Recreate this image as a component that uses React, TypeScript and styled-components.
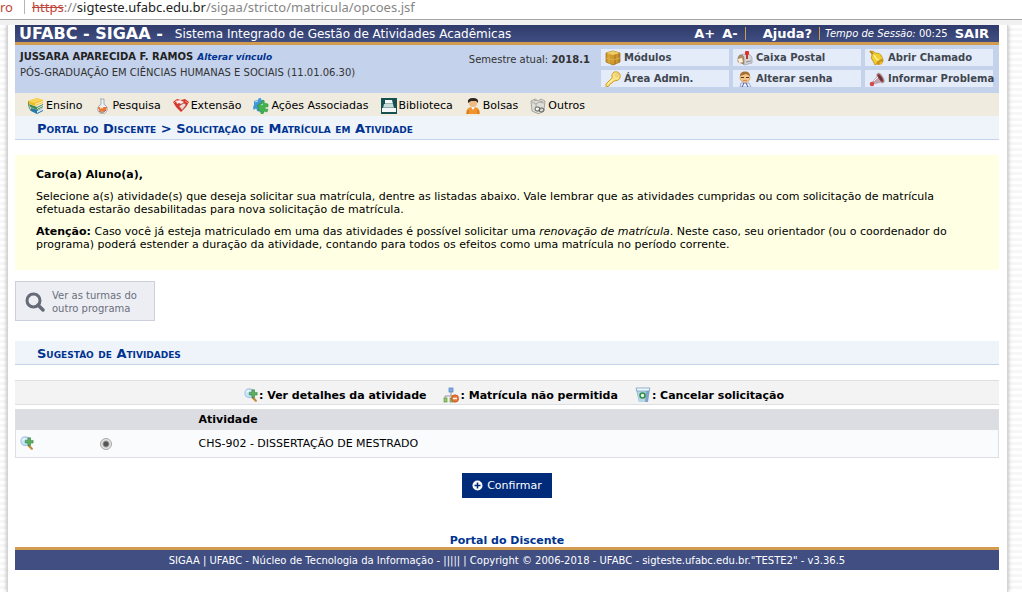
import React from "react";
import styled, { createGlobalStyle } from "styled-components";

const GlobalStyle = createGlobalStyle`
  * { box-sizing: border-box; }
  body {
    margin: 0;
    background: #fff;
    color: #000;
    font: 11px/13px Verdana, "DejaVu Sans", sans-serif;
  }
  a { color: inherit; text-decoration: none; }
  svg { display: block; flex: none; }
`;

const Screen = styled.div`
  min-height: 100vh;
  display: flex;
  flex-direction: column;
`;

const AddressBar = styled.div`
  display: flex;
  height: 20px;
  border-bottom: 1px solid #a8a6a4;
  background: #fff;
  color: #868686;
  font: 13px/14px "Noto Sans", sans-serif;
  white-space: nowrap;
`;

const SecurityLabel = styled.span`
  width: 25px;
  height: 14px;
  margin-right: 7px;
  border-right: 1px solid #b5b5b5;
  color: #c0453a;
`;

const Scheme = styled.s`
  color: #c0453a;
`;

const Host = styled.span`
  color: #222;
`;

const Backdrop = styled.div`
  flex: 1;
  display: flex;
  padding: 0 14px 0 7px;
  border-top: 5px solid #f1f1f1;
  background: repeating-linear-gradient(#fff 0 3px, #f7f7f7 3px 6px);
`;

const Page = styled.div`
  flex: 1;
  min-width: 0;
  padding: 0 8px 22px 7px;
  border: solid #d4d4d4;
  border-width: 0 1px;
  background: #fff;
  box-shadow: 0 0 4px #aaa;
  clip-path: inset(0 -6px 0 -6px);
`;

const TopBar = styled.header`
  display: flex;
  align-items: center;
  height: 20px;
  padding: 0 10px 0 4px;
  border-bottom: 3px solid #d29c50;
  background: linear-gradient(#2f3b6b, #404e82);
  color: #fff;
  white-space: nowrap;
`;

const Brand = styled.h1`
  margin: 0 12px 0 0;
  font-size: 16px;
  line-height: 17px;
`;

const SystemName = styled.span`
  flex: 1;
  padding-top: 2px;
  font-size: 12px;
`;

const TopLinks = styled.nav`
  display: flex;
  align-items: center;
  gap: 7px;
  font-weight: bold;
  font-size: 13px;
`;

const Divided = styled.span<{ $pad?: boolean }>`
  display: flex;
  align-items: center;
  height: 13px;
  padding-left: ${(p) => (p.$pad ? 17 : 5)}px;
  border-left: 1px solid #d29c50;
`;

const Session = styled.span`
  font-size: 10px;
  font-weight: normal;
`;

const UserPanel = styled.section`
  display: flex;
  min-height: 48px;
  padding: 4px 6px 6px 5px;
  background: #c4d2eb;
  color: #333;
`;

const UserInfo = styled.div`
  flex: 1;
  font-size: 10px;
  line-height: 15px;
  white-space: nowrap;
`;

const UserName = styled.strong`
  color: #222;
`;

const SwitchLink = styled.a`
  margin-left: 4px;
  color: #003390;
  font-size: 9px;
  font-weight: bold;
  font-style: italic;
`;

const Semester = styled.div`
  padding: 4px 11px 0 0;
  font-size: 10px;
  white-space: nowrap;
`;

const QuickLinks = styled.nav`
  display: grid;
  grid-template-columns: repeat(3, 128px);
  grid-auto-rows: 17px;
  gap: 4px;
`;

const QuickLink = styled.a`
  display: flex;
  align-items: center;
  gap: 3px;
  padding-left: 4px;
  background: #e5ecf9;
  color: #404650;
  font-size: 10px;
  font-weight: bold;
  white-space: nowrap;
`;

const Menu = styled.nav`
  display: flex;
  align-items: center;
  gap: 12px;
  height: 23px;
  padding: 2px 0 0 13px;
  background: #efebde;
`;

const MenuItem = styled.a`
  display: flex;
  align-items: center;
  gap: 2px;
  white-space: nowrap;
`;

const Heading = styled.h2`
  margin: 0;
  padding: 6px 22px 3px;
  border-bottom: 1px solid #c4d2eb;
  background: #eff3fa;
  color: #003390;
  font-size: 13px;
  line-height: 14px;
  font-variant: small-caps;
`;

const Notice = styled.section`
  margin: 15px 0 11px;
  padding: 13px 21px 10px;
  background: #ffffe4;
`;

const Paragraph = styled.p`
  margin: 0 0 9px;
`;

const OtherProgram = styled.button`
  display: flex;
  align-items: center;
  gap: 7px;
  width: 140px;
  height: 40px;
  margin: 0 0 20px;
  padding: 2px 9px 0;
  border: 1px solid #ccd0dc;
  background: #edeef3;
  color: #6a6f7c;
  font: 10px/13px Verdana, "DejaVu Sans", sans-serif;
  text-align: left;
`;

const Legend = styled.div`
  display: flex;
  justify-content: center;
  gap: 17px;
  height: 25px;
  margin: 15px 0 4px;
  padding: 5px 0 0 14px;
  border: solid #dedfe3;
  border-width: 1px 0;
  background: #f3f3f3;
  font-weight: bold;
`;

const LegendItem = styled.span`
  display: flex;
  align-items: center;
  gap: 1px;
`;

const ActivityTable = styled.table`
  width: 100%;
  border: 1px solid #dedfe3;
  border-collapse: collapse;
  table-layout: fixed;
  background: #fafbfd;
`;

const Column = styled.col<{ $width?: number }>`
  width: ${(p) => (p.$width ? `${p.$width}px` : "auto")};
`;

const HeadCell = styled.th`
  height: 20px;
  padding: 0;
  background: #dcdde2;
  text-align: left;
`;

const Cell = styled.td`
  height: 28px;
  padding: 0;
`;

const DetailsButton = styled.button`
  display: block;
  padding: 0 0 0 4px;
  border: 0;
  background: none;
`;

const Radio = styled.input`
  display: block;
  appearance: none;
  width: 12px;
  height: 12px;
  margin: 2px 0 0;
  border: 1px solid #a8a8a8;
  border-radius: 50%;
  background: radial-gradient(circle, #555 0 2px, #e6e6e6 4px);
`;

const Actions = styled.div`
  display: flex;
  flex-direction: column;
  align-items: center;
  gap: 36px;
  padding-top: 15px;
`;

const Confirm = styled.button`
  display: flex;
  align-items: center;
  gap: 4px;
  height: 25px;
  padding: 0 10px;
  border: 0;
  background: #002b7a;
  color: #fff;
  font: 11px/13px Verdana, "DejaVu Sans", sans-serif;
`;

const PortalLink = styled.a`
  color: #003390;
  font-weight: bold;
`;

const Footer = styled.footer`
  padding: 4px 0 3px;
  border-top: 3px solid #d29c50;
  background: #404e82;
  color: #fff;
  font-size: 10px;
  text-align: center;
`;

const Svg = ({ children, size = 16 }: { children: React.ReactNode; size?: number }) => (
  <svg width={size} height={size} viewBox="0 0 16 16" aria-hidden="true">{children}</svg>
);

const Books = () => (
  <Svg>
    <path d="M3 10l7 2 5-2v3l-6 3-6-3z" fill="#2578a8" />
    <path d="M9 13l6-3v2l-6 3z" fill="#dceaf2" />
    <path d="M1 6l8 3 6-3v3l-6 3-7-3z" fill="#3f8a58" />
    <path d="M9 10l6-3v1l-6 3z" fill="#f1f4e6" />
    <path d="M0 3l9-3 6 2v3L7 8 1 6z" fill="#f1bd27" />
    <path d="M0 3l7 2 8-3-6-2z" fill="#f7d457" />
    <path d="M7 6l8-3v1L7 7z" fill="#fff6cf" />
    <path d="M0 3l1 6 2 4" fill="none" stroke="#5b8c5c" />
  </Svg>
);

const Flask = () => (
  <Svg>
    <path d="M6 1h4M7 1v5.500a4.800 4.800 0 1 0 3 0V1" fill="#eef2f6" stroke="#a3adb8" />
    <path d="M4 9h9a4.400 4.400 0 1 1-9 0z" fill="#e8783a" />
    <path d="M5 13q4 3 7-1" fill="none" stroke="#b44a1e" />
    <path d="M6 10q2-1 3 0" fill="none" stroke="#ffe3c8" strokeWidth="1.5" />
  </Svg>
);

const Handshake = () => (
  <Svg>
    <path d="M0 4l4-3 4 1 4-1 4 3-3 5-5 5-5-5z" fill="#d8362c" />
    <path d="M3 3l4-1 4 2-3 2-2-1-2 1z" fill="#f6eee8" />
    <path d="M6 8l5-3 2 2-4 5z" fill="#f3dcd4" stroke="#9a706a" strokeWidth=".6" />
    <path d="M1 5l3-3M12 3l3 2" fill="none" stroke="#f58b78" />
  </Svg>
);

const Puzzle = () => (
  <Svg>
    <path d="M1 3l4-1q0-2 2-2t1 2l3 1-1 4q3 0 2 2t-3 1l-1 4-4-1q0-3-2-2t-1 2l-1-4 1-2z" fill="#4298d7" />
    <path d="M6 6l3-1q-1-3 1-3t1 3l4 1v3q-3-1-3 1t3 1l-1 3-3-1q0 3-2 3t-1-3l-3-1 1-3q-2 0-2-1t2-1z" fill="#43b44c" stroke="#28843b" strokeWidth=".5" />
    <path d="M2 4l3-1M8 7l2-1" stroke="#b7e5ed" />
  </Svg>
);

const Library = () => (
  <Svg>
    <path d="M0 0h16v16H0z" fill="#17504f" />
    <path d="M4 2h7l1 4H4z" fill="#f4faf9" />
    <path d="M3 6h9l1 4H2z" fill="#c8dedc" />
    <path d="M1 10h14v4H1z" fill="#f5f8f7" />
    <path d="M4 5.500h8M2 9.500h11" stroke="#759894" strokeWidth=".7" />
  </Svg>
);

const Person = () => (
  <Svg>
    <path d="M1 16q0-6 5-7h4q5 1 5 7z" fill="#f2942d" />
    <circle cx="8" cy="5" r="4" fill="#efba84" />
    <path d="M3 5q-1-5 5-5t5 5l-2-2H6z" fill="#2d2520" />
    <path d="M6 9l2 3 2-3" fill="#fff" />
    <path d="M3 12v4M13 12v4" stroke="#c36a19" />
  </Svg>
);

const Boxes = () => (
  <Svg>
    <path d="M1 3l4-2 3 2 3-2 4 2-1 9-5 4-7-3z" fill="#deded9" stroke="#96968f" strokeWidth=".8" />
    <path d="M2 4l4 2 3-2 5 1M6 6v7M4 3l3-1M10 3l3 1" fill="none" stroke="#aaa9a2" />
    <rect x="5" y="9" width="5" height="4" rx="2" fill="#f5f5f2" stroke="#5d5d5b" />
    <rect x="9" y="10" width="5" height="4" rx="2" fill="none" stroke="#5d5d5b" />
  </Svg>
);

const Cube = () => (
  <Svg>
    <path d="M1 3l7-2 7 2v9l-7 3-7-3z" fill="#d09a2c" stroke="#98671d" strokeWidth=".7" />
    <path d="M1 3l7 2 7-2-7-2z" fill="#f0cd62" />
    <path d="M9 5l6-2v9l-6 3z" fill="#a46d1b" opacity=".5" />
    <path d="M4 4v10M12 4v10M1 8l7 2 7-2" fill="none" stroke="#e8c25a" strokeWidth=".6" />
  </Svg>
);

const Key = () => (
  <Svg>
    <path d="M1 13l6-6q-1-4 2-6 3-1 5 1t1 5-6 3l-2 2-2 1-1 2-3 1z" fill="#fae181" stroke="#cfa12c" />
    <circle cx="12" cy="4" r="1.3" fill="#fff8dc" stroke="#cfa12c" strokeWidth=".6" />
    <path d="M3 13l5-5" stroke="#fff2b1" />
  </Svg>
);

const Mailbox = () => (
  <Svg>
    <path d="M4 5q2-1 5-1 6 0 6 5v4l-8 2-3-3z" fill="#d3d5da" stroke="#999aa1" strokeWidth=".7" />
    <path d="M1 12V8q1-4 4-3 2 1 2 4v5z" fill="#b08e68" stroke="#8a735c" strokeWidth=".6" />
    <path d="M1 9l4-1 1 4-4 1z" fill="#fff3d4" />
    <path d="M10 9V2" stroke="#bd251f" strokeWidth="1.8" />
    <rect x="8" y="1" width="4" height="4" rx="1" fill="#e22f2a" />
    <path d="M9 12l5-1" stroke="#8c8d94" />
  </Svg>
);

const BoyHead = () => (
  <Svg>
    <path d="M3 16l1-4h8l2 4z" fill="#f1f4ff" stroke="#8a9ad0" strokeWidth=".8" />
    <path d="M7 12l-2 4M9 12l2 4" stroke="#4057a8" />
    <ellipse cx="8" cy="6.5" rx="5" ry="5" fill="#f2c488" stroke="#c98a44" strokeWidth=".6" />
    <path d="M3 5q0-4.500 5-4.500T13 5l-4-2z" fill="#a5702f" />
    <path d="M4 6.500h3M9 6.500h3" stroke="#5a3520" />
    <path d="M6 9.500h4" stroke="#d18a58" />
  </Svg>
);

const Bell = () => (
  <Svg>
    <path d="M2 2l2-1 2 2q6 0 7 4l1 3-8 5-2-4q-3-3-1-6z" fill="#f2cd2b" stroke="#b18515" strokeWidth=".7" />
    <path d="M5 5q2 5 7 6" fill="none" stroke="#fff3a0" strokeWidth="1.5" />
    <ellipse cx="11" cy="12" rx="4" ry="2" transform="rotate(-35 11 12)" fill="#c9951b" />
    <circle cx="12" cy="13" r="1.5" fill="#f0b929" />
    <path d="M1 1l3 3" stroke="#bf8e19" strokeWidth="2" />
  </Svg>
);

const Megaphone = () => (
  <Svg>
    <path d="M3 11l7-8 5 8-9 2z" fill="#c3a3a9" />
    <ellipse cx="11.500" cy="7" rx="2.600" ry="5.500" transform="rotate(-32 11.500 7)" fill="#a04a52" stroke="#b9bcc4" />
    <ellipse cx="11.500" cy="7" rx="1" ry="3.500" transform="rotate(-32 11.500 7)" fill="#5d3238" />
    <circle cx="3" cy="13" r="2.300" fill="#d24b52" />
    <path d="M5 10l4-4" stroke="#f5f5f7" />
  </Svg>
);

const MagnifierPlus = () => (
  <Svg size={14}>
    <path d="M10 11l3.500 3.500" stroke="#c48a3c" strokeWidth="2.6" strokeLinecap="round" />
    <circle cx="6" cy="6" r="5" fill="#c8e4fa" stroke="#a8c8e8" strokeWidth="1.2" />
    <path d="M3 5q1-2 3-2" fill="none" stroke="#fff" strokeWidth="1.3" />
    <path d="M9 2h3v3h3v3h-3v3H9V8H6V5h3z" fill="#5fae5f" stroke="#277d35" strokeWidth=".6" />
  </Svg>
);

const OrgMinus = () => (
  <Svg>
    <path d="M8 5v4M2 12V9h9" fill="none" stroke="#999" />
    <rect x="6" y="1" width="4" height="4" fill="#82aee4" stroke="#5482bd" strokeWidth=".7" />
    <rect x="1" y="11" width="3" height="4" fill="#9bc96c" stroke="#639343" strokeWidth=".7" />
    <rect x="7" y="11" width="3" height="4" fill="#9bc96c" stroke="#639343" strokeWidth=".7" />
    <circle cx="12" cy="11.5" r="3.7" fill="#e67433" stroke="#bb4a1d" strokeWidth=".6" />
    <path d="M10 11.5h4" stroke="#fff" strokeWidth="1.5" />
  </Svg>
);

const RecycleBin = () => (
  <Svg>
    <path d="M1 2h14l-2 13H4z" fill="#7fa6c8" />
    <path d="M2 3h9l-1 12H4z" fill="#b9d5e8" />
    <path d="M1 1h14l-1 3H2z" fill="#f1f8fc" stroke="#76a1c2" strokeWidth=".8" />
    <circle cx="7.500" cy="8.500" r="2.500" fill="#e8f6ea" stroke="#318e4a" strokeWidth="1.6" />
  </Svg>
);

const SearchIcon = () => (
  <svg width="20" height="20" viewBox="0 0 20 20" aria-hidden="true">
    <circle cx="8.5" cy="8.5" r="6.5" fill="none" stroke="#656a78" strokeWidth="3" />
    <path d="M13 13l5 5" stroke="#656a78" strokeWidth="3.4" strokeLinecap="round" />
  </svg>
);

const PlusCircle = () => (
  <svg width="11" height="11" viewBox="0 0 11 11" aria-hidden="true">
    <circle cx="5.5" cy="5.5" r="5" fill="#fff" />
    <path d="M5.5 2.5v6M2.5 5.5h6" stroke="#002b7a" strokeWidth="1.6" />
  </svg>
);

const quickLinks = [
  { icon: <Cube />, label: "Módulos" },
  { icon: <Mailbox />, label: "Caixa Postal" },
  { icon: <Bell />, label: "Abrir Chamado" },
  { icon: <Key />, label: "Área Admin." },
  { icon: <BoyHead />, label: "Alterar senha" },
  { icon: <Megaphone />, label: "Informar Problema" },
];

const menuItems = [
  { icon: <Books />, label: "Ensino" },
  { icon: <Flask />, label: "Pesquisa" },
  { icon: <Handshake />, label: "Extensão" },
  { icon: <Puzzle />, label: "Ações Associadas" },
  { icon: <Library />, label: "Biblioteca" },
  { icon: <Person />, label: "Bolsas" },
  { icon: <Boxes />, label: "Outros" },
];

export default function App() {
  return (
    <Screen>
      <GlobalStyle />
      <AddressBar>
        <SecurityLabel>ro</SecurityLabel>
        <span>
          <Scheme>https</Scheme>://<Host>sigteste.ufabc.edu.br</Host>/sigaa/stricto/matricula/opcoes.jsf
        </span>
      </AddressBar>
      <Backdrop>
        <Page>
          <TopBar>
            <Brand>UFABC - SIGAA -</Brand>
            <SystemName>Sistema Integrado de Gestão de Atividades Acadêmicas</SystemName>
            <TopLinks>
              <a href="#maior">A+</a>
              <a href="#menor">A-</a>
              <Divided $pad><a href="#ajuda">Ajuda?</a></Divided>
              <Divided><Session><em>Tempo de Sessão:</em> 00:25</Session></Divided>
              <a href="#sair">SAIR</a>
            </TopLinks>
          </TopBar>
          <UserPanel>
            <UserInfo>
              <div>
                <UserName>JUSSARA APARECIDA F. RAMOS</UserName>
                <SwitchLink href="#vinculo">Alterar vínculo</SwitchLink>
              </div>
              <div>PÓS-GRADUAÇÃO EM CIÊNCIAS HUMANAS E SOCIAIS (11.01.06.30)</div>
            </UserInfo>
            <Semester>Semestre atual: <strong>2018.1</strong></Semester>
            <QuickLinks>
              {quickLinks.map((q) => (
                <QuickLink href="#atalho" key={q.label}>{q.icon}{q.label}</QuickLink>
              ))}
            </QuickLinks>
          </UserPanel>
          <Menu>
            {menuItems.map((m) => (
              <MenuItem href="#menu" key={m.label}>{m.icon}{m.label}</MenuItem>
            ))}
          </Menu>
          <Heading><a href="#portal">Portal do Discente</a> &gt; Solicitação de Matrícula em Atividade</Heading>
          <Notice>
            <Paragraph><strong>Caro(a) Aluno(a),</strong></Paragraph>
            <Paragraph>
              Selecione a(s) atividade(s) que deseja solicitar sua matrícula, dentre as listadas abaixo. Vale lembrar que as atividades cumpridas ou com solicitação de matrícula<br />
              efetuada estarão desabilitadas para nova solicitação de matrícula.
            </Paragraph>
            <Paragraph>
              <strong>Atenção:</strong> Caso você já esteja matriculado em uma das atividades é possível solicitar uma <em>renovação de matrícula</em>. Neste caso, seu orientador (ou o coordenador do<br />
              programa) poderá estender a duração da atividade, contando para todos os efeitos como uma matrícula no período corrente.
            </Paragraph>
          </Notice>
          <OtherProgram type="button">
            <SearchIcon />
            <span>Ver as turmas do outro programa</span>
          </OtherProgram>
          <Heading>Sugestão de Atividades</Heading>
          <Legend>
            <LegendItem><MagnifierPlus />: Ver detalhes da atividade</LegendItem>
            <LegendItem><OrgMinus />: Matrícula não permitida</LegendItem>
            <LegendItem><RecycleBin />: Cancelar solicitação</LegendItem>
          </Legend>
          <ActivityTable>
            <colgroup>
              <Column $width={84} />
              <Column $width={99} />
              <Column />
            </colgroup>
            <thead>
              <tr><HeadCell /><HeadCell /><HeadCell>Atividade</HeadCell></tr>
            </thead>
            <tbody>
              <tr>
                <Cell><DetailsButton type="button" aria-label="Ver detalhes da atividade"><MagnifierPlus /></DetailsButton></Cell>
                <Cell><Radio type="radio" id="chs902" name="atividade" defaultChecked /></Cell>
                <Cell><label htmlFor="chs902">CHS-902 - DISSERTAÇÃO DE MESTRADO</label></Cell>
              </tr>
            </tbody>
          </ActivityTable>
          <Actions>
            <Confirm type="button"><PlusCircle />Confirmar</Confirm>
            <PortalLink href="#portal">Portal do Discente</PortalLink>
          </Actions>
          <Footer>
            SIGAA | UFABC - Núcleo de Tecnologia da Informação - ||||| | Copyright © 2006-2018 - UFABC - sigteste.ufabc.edu.br."TESTE2" - v3.36.5
          </Footer>
        </Page>
      </Backdrop>
    </Screen>
  );
}
